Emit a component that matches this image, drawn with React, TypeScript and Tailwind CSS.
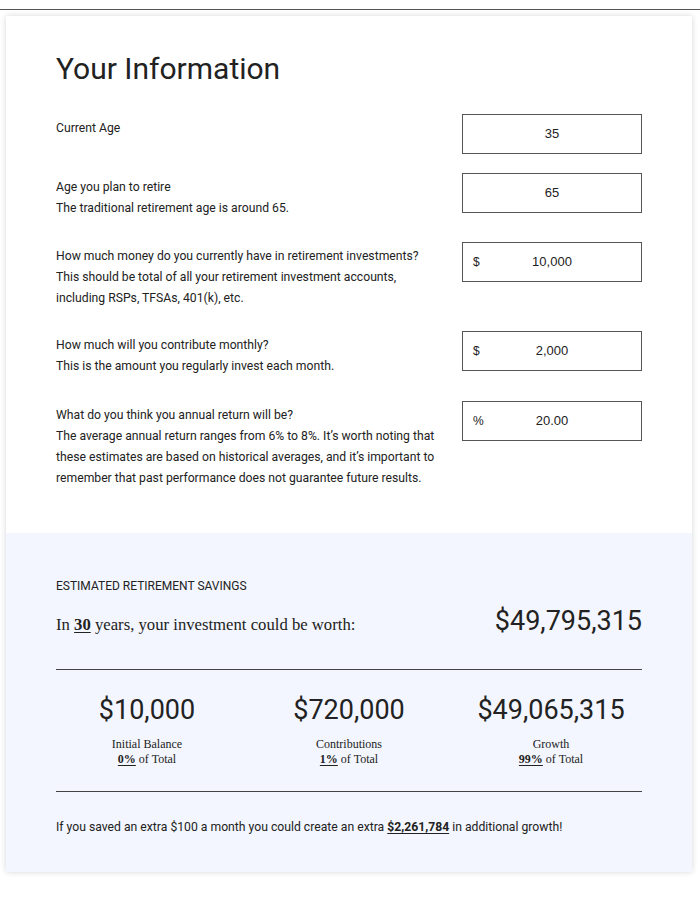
import React from 'react';

interface Field {
  label: string;
  help?: string[];
  value: string;
  prefix?: string;
  gap: string;
}

const FIELDS: Field[] = [
  { label: 'Current Age', value: '35', gap: 'mb-[19px]' },
  {
    label: 'Age you plan to retire',
    help: ['The traditional retirement age is around 65.'],
    value: '65',
    gap: 'mb-[23px]',
  },
  {
    label: 'How much money do you currently have in retirement investments?',
    help: ['This should be total of all your retirement investment accounts,', 'including RSPs, TFSAs, 401(k), etc.'],
    value: '10,000',
    prefix: '$',
    gap: 'mb-[22px]',
  },
  {
    label: 'How much will you contribute monthly?',
    help: ['This is the amount you regularly invest each month.'],
    value: '2,000',
    prefix: '$',
    gap: 'mb-[24px]',
  },
  {
    label: 'What do you think you annual return will be?',
    help: [
      'The average annual return ranges from 6% to 8%. It\u2019s worth noting that',
      'these estimates are based on historical averages, and it\u2019s important to',
      'remember that past performance does not guarantee future results.',
    ],
    value: '20.00',
    prefix: '%',
    gap: '',
  },
];

const STATS = [
  { amount: '$10,000', label: 'Initial Balance', pct: '0%' },
  { amount: '$720,000', label: 'Contributions', pct: '1%' },
  { amount: '$49,065,315', label: 'Growth', pct: '99%' },
];

function InputRow({ field }: { field: Field }) {
  return (
    <div className={`flex items-start justify-between ${field.gap}`}>
      <div className="pt-[4px] text-[12.2px] leading-[21px] text-[#222]">
        <p>{field.label}</p>
        {field.help?.map((line) => (
          <p key={line}>{line}</p>
        ))}
      </div>
      <div className="relative flex h-[40px] w-[180px] shrink-0 items-center justify-center border border-[#555] bg-white font-['Liberation_Sans',Arial,sans-serif] text-[13px] text-[#222]">
        {field.prefix && <span className="absolute left-[10px] top-1/2 -translate-y-1/2 text-[12px]">{field.prefix}</span>}
        <span>{field.value}</span>
      </div>
    </div>
  );
}

export default function App() {
  return (
    <div className="min-h-[900px] bg-white pt-[9px] font-['Roboto',sans-serif]">
      <div className="h-px bg-[#555]" />

      <div className="ml-[6px] mt-[6px] w-[686px] bg-white shadow-[0_0_6px_rgba(0,0,0,0.16)]">
        {/* Your information */}
        <section className="px-[50px] pb-[44px] pt-[35px]">
          <h1 className="mb-[27px] text-[30px] leading-[36px] text-[#222]">Your Information</h1>
          {FIELDS.map((f) => (
            <InputRow key={f.label} field={f} />
          ))}
        </section>

        {/* Results */}
        <section className="bg-[#f3f6fe] px-[50px] pb-[34px] pt-[45px] text-[#222]">
          <p className="text-[12px] uppercase leading-[16px]">Estimated Retirement Savings</p>

          <div className="mt-[11px] flex items-baseline justify-between">
            <p className="font-['Liberation_Serif','Times_New_Roman',serif] text-[16.7px] leading-[20px]">
              In <span className="font-bold underline underline-offset-2">30</span> years, your investment could be worth:
            </p>
            <p className="text-[27px] leading-[32px]">$49,795,315</p>
          </div>

          <div className="mt-[32px] h-px bg-[#444]" />

          <div className="-mx-[10px] mt-[24px] grid grid-cols-3 text-center">
            {STATS.map((s) => (
              <div key={s.label}>
                <p className="text-[27px] leading-[32px]">{s.amount}</p>
                <div className="mt-[11px] font-['Liberation_Serif','Times_New_Roman',serif] text-[12px] leading-[15px]">
                  <p>{s.label}</p>
                  <p>
                    <span className="font-bold underline underline-offset-2">{s.pct}</span> of Total
                  </p>
                </div>
              </div>
            ))}
          </div>

          <div className="mt-[24px] h-px bg-[#444]" />

          <p className="mt-[25px] text-[12.2px] leading-[21px]">
            If you saved an extra $100 a month you could create an extra{' '}
            <span className="font-bold underline underline-offset-2">$2,261,784</span> in additional growth!
          </p>
        </section>
      </div>
    </div>
  );
}
